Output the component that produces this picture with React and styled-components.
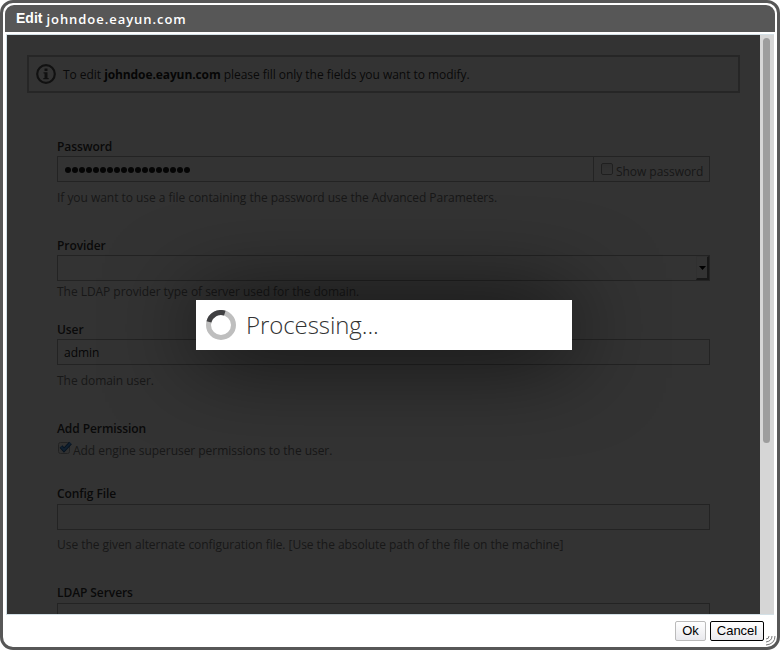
import React from "react";
import styled, { createGlobalStyle } from "styled-components";

const Global = createGlobalStyle`
  *{box-sizing:border-box}
  body{margin:0;background:#fff;overflow:hidden}
`;
const Dialog = styled.div`
  position:relative;width:780px;height:650px;padding:2px;background:#fff;
  border:3px solid #575757;border-radius:13px;display:flex;flex-direction:column;
`;
const TitleBar = styled.header`
  height:27px;flex:none;background:#575757;color:#fff;border-radius:9px 9px 0 0;padding:0 0 0 11px;
  display:flex;align-items:center;gap:4px;font:bold 14px/27px "Liberation Sans",Arial,sans-serif;
`;
const Host = styled.span`
  font:600 13px/27px "Open Sans","Noto Sans",sans-serif;letter-spacing:.95px;padding-top:1px;
`;
const Body = styled.div`
  position:relative;height:581px;flex:none;margin:2px 1px 0;border:1px solid #d3e0e6;border-right:0;
  display:flex;
`;
const Page = styled.main`
  position:relative;width:753px;height:579px;overflow:hidden;background:#fff;padding:20px 20px 0;
  font:12px/18px "Open Sans","Noto Sans",sans-serif;color:#333;letter-spacing:-.04px;
`;
const Notice = styled.div`
  height:38px;width:713px;border:2px solid #bfbfbf;display:flex;align-items:center;gap:7px;padding-left:7px;
  svg{flex:none} span{padding-top:2px} b{color:#222;letter-spacing:-.1px}
`;
const Form = styled.div`padding:44px 30px 0;width:713px;`;
const Field = styled.section`margin-bottom:${p => p.$gap ?? 30}px;`;
const Label = styled.div`
  height:19px;line-height:${p => p.$high ? 18 : 20}px;font-weight:600;color:#333;white-space:nowrap;
  letter-spacing:-.08px;
`;
const Control = styled.div`
  height:26px;border:1px solid #b0b0b0;display:flex;align-items:center;color:#222;
  padding:2px 0 0 ${p => p.$pad ?? 6}px;
`;
const Dots = styled.span`display:flex;flex:1;gap:1px;i{width:6px;height:6px;border-radius:50%;background:#1a1a1a}`;
const AddOn = styled.div`
  width:116px;height:24px;margin-top:-2px;border-left:1px solid #b0b0b0;padding:6px 0 0 7px;display:flex;gap:3px;
  color:#777;white-space:nowrap;
`;
const Box = styled.span`
  width:12px;height:12px;flex:none;border:1px solid #999;border-radius:2px;
  background:linear-gradient(#e8e8e8,#fff);
`;
const Arrow = styled.span`
  margin:-2px 0 0 auto;width:13px;height:24px;border-style:solid;border-width:1px 2px 2px 1px;
  border-color:#eee #777 #777 #eee;display:grid;place-items:center;
`;
const Help = styled.div`
  margin-top:${p => p.$top ?? 7}px;margin-bottom:${p => 6 - (p.$top ?? 7) + (p.$after ?? 0)}px;
  height:18px;color:#777;white-space:nowrap;
`;
const CheckRow = styled.div`
  height:18px;margin-top:3px;display:flex;color:#777;white-space:nowrap;
  span{padding-top:1px}
`;
const Shade = styled.div`
  position:absolute;inset:0;background:rgba(0,0,0,.8);
`;
const Processing = styled.div`
  position:absolute;left:189px;top:265px;width:376px;height:50px;background:#fff;
  box-shadow:0 3px 90px rgba(0,0,0,.88);display:flex;align-items:center;padding-left:10px;gap:10px;
  font:300 24px/50px "Open Sans","Noto Sans",sans-serif;color:#333;letter-spacing:-.07px;
`;
const Track = styled.div`width:14px;height:579px;background:#d6d6d6;padding:3px 0 0 3px;`;
const Thumb = styled.div`width:7px;height:405px;border-radius:4px;background:#9d9d9d;`;
const Footer = styled.footer`flex:1;display:flex;justify-content:flex-end;gap:4px;padding:6px 11px 0 0;`;
const Button = styled.button`
  width:${p => p.$w}px;height:20px;padding:0;border:1px solid ${p => p.$dark ? "#000" : "#bbb"};border-radius:2px;
  background:linear-gradient(#fff,#e9e9ed);font:13px/16px "Liberation Sans",Arial,sans-serif;color:#000;
`;
const Grip = styled.svg`position:absolute;right:1px;bottom:1px;`;

const fields = {
  password: "If you want to use a file containing the password use the Advanced Parameters.",
  provider: "The LDAP provider type of server used for the domain.",
  config: "Use the given alternate configuration file. [Use the absolute path of the file on the machine]",
};

export default function App() {
  return (
    <>
      <Global />
      <Dialog>
        <TitleBar>Edit<Host>johndoe.eayun.com</Host></TitleBar>
        <Body>
          <Page>
            <Notice>
              <svg width="20" height="20" viewBox="0 0 20 20">
                <circle cx="10" cy="10" r="8.8" fill="none" stroke="#555" strokeWidth="2.2" />
                <path d="M8.5 4.5h3v2.5h-3zM7.5 8.2h4v5.8h1.2v1.3H7.3V14h1.2V9.6h-1z" fill="#555" />
              </svg>
              <span>To edit <b>johndoe.eayun.com</b> please fill only the fields you want to modify.</span>
            </Notice>
            <Form>
              <Field>
                <Label>Password</Label>
                <Control $pad={7}>
                  <Dots>{Array.from({ length: 18 }, (_, i) => <i key={i} />)}</Dots>
                  <AddOn><Box />Show password</AddOn>
                </Control>
                <Help>{fields.password}</Help>
              </Field>
              <Field $gap={19}>
                <Label>Provider</Label>
                <Control>
                  <Arrow><svg width="7" height="4"><path d="M0 0h7L3.5 4z" fill="#000" /></svg></Arrow>
                </Control>
                <Help $top={2} $after={-4}>{fields.provider}</Help>
              </Field>
              <Field>
                <Label>User</Label>
                <Control>admin</Control>
                <Help>The domain user.</Help>
              </Field>
              <Field $gap={26}>
                <Label>Add Permission</Label>
                <CheckRow>
                  <svg width="16" height="16" viewBox="0 0 16 16">
                    <rect x="1.5" y="1.5" width="11" height="11" rx="2" fill="#f4f4f4" stroke="#aaa" />
                    <path d="M4 5.5l3 3.5L13.5 2" fill="none" stroke="#1f5590" strokeWidth="3.8" />
                    <path d="M4 5.5l3 3.5L13.5 2" fill="none" stroke="#4f9de8" strokeWidth="2" />
                  </svg>
                  <span>Add engine superuser permissions to the user.</span>
                </CheckRow>
              </Field>
              <Field>
                <Label $high>Config File</Label>
                <Control />
                <Help $top={6}>{fields.config}</Help>
              </Field>
              <Field>
                <Label $high>LDAP Servers</Label>
                <Control />
              </Field>
            </Form>
            <Shade />
            <Processing>
              <svg width="30" height="30" viewBox="0 0 30 30" fill="none" strokeWidth="5">
                <circle cx="15" cy="15" r="12.5" stroke="#bebebe" />
                <path d="M2.9 11.8A12.5 12.5 0 0 1 18.8 3.1" stroke="#404042" />
              </svg>
              Processing...
            </Processing>
          </Page>
          <Track><Thumb /></Track>
        </Body>
        <Footer>
          <Button $w={31}>Ok</Button>
          <Button $w={54} $dark>Cancel</Button>
        </Footer>
        <Grip width="10" height="11" viewBox="0 0 10 11" fill="none" stroke="#777" strokeWidth="1">
          <path d="M9 1Q9 9 0 10M6 1Q6 6 0 7M3 1Q3 4 0 4" />
        </Grip>
      </Dialog>
    </>
  );
}
